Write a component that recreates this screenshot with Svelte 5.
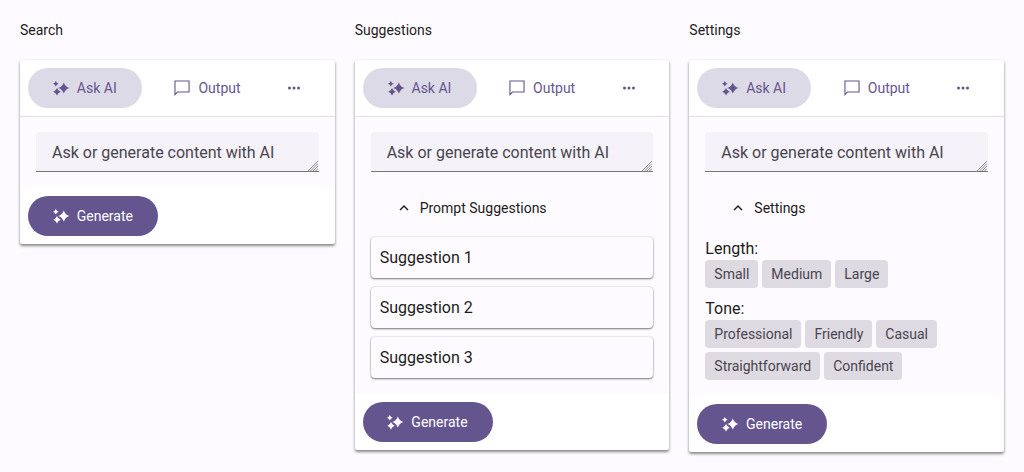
<script lang="ts">
	const lengths = ['Small', 'Medium', 'Large'];
	const tones = ['Professional', 'Friendly', 'Casual', 'Straightforward', 'Confident'];
	const suggestions = ['Suggestion 1', 'Suggestion 2', 'Suggestion 3'];
</script>

{#snippet spark(cls)}
	<svg class={cls} viewBox="0 0 18 18" aria-hidden="true">
		<path d="M11.8 3.4 Q13.2 7.6 17.4 9 Q13.2 10.4 11.8 14.6 Q10.4 10.4 6.2 9 Q10.4 7.6 11.8 3.4Z" />
		<path d="M3.8 1.9 Q4.5 4 6.6 4.7 Q4.5 5.4 3.8 7.5 Q3.1 5.4 1 4.7 Q3.1 4 3.8 1.9Z" />
		<path d="M5 9.1 Q5.9 11.9 8.7 12.8 Q5.9 13.7 5 16.5 Q4.1 13.7 1.3 12.8 Q4.1 11.9 5 9.1Z" />
	</svg>
{/snippet}

{#snippet tabs()}
	<div class="tabs">
		<button class="tab active">
			{@render spark('icon')}
			Ask AI
		</button>
		<button class="tab">
			<svg class="icon" viewBox="0 0 24 24" aria-hidden="true">
				<path d="M2.6 2.6 H21.4 V17.4 H5.9 L2.6 20.7 Z" class="outline" />
			</svg>
			Output
		</button>
		<button class="more" aria-label="More">
			<svg viewBox="0 0 24 24" aria-hidden="true">
				<circle cx="6" cy="12" r="2" />
				<circle cx="12" cy="12" r="2" />
				<circle cx="18" cy="12" r="2" />
			</svg>
		</button>
	</div>
{/snippet}

{#snippet prompt()}
	<div class="prompt-wrap">
		<textarea class="prompt" placeholder="Ask or generate content with AI"></textarea>
		<svg class="grip" viewBox="0 0 10 10" aria-hidden="true">
			<path d="M10 0 L0 10 M10 2.5 L2.5 10 M10 5 L5 10 M10 7.5 L7.5 10" />
		</svg>
	</div>
{/snippet}

{#snippet footer()}
	<div class="footer">
		<button class="generate">
			{@render spark('icon')}
			Generate
		</button>
	</div>
{/snippet}

{#snippet accordion(title)}
	<div class="accordion">
		<svg class="chevron" viewBox="0 0 24 24" aria-hidden="true">
			<path d="M12 8l-6 6 1.41 1.41L12 10.83l4.59 4.58L18 14z" />
		</svg>
		{title}
	</div>
{/snippet}

<div class="page">
	<section class="column">
		<h2>Search</h2>
		<div class="card">
			{@render tabs()}
			<div class="body">
				{@render prompt()}
			</div>
			{@render footer()}
		</div>
	</section>

	<section class="column">
		<h2>Suggestions</h2>
		<div class="card">
			{@render tabs()}
			<div class="body">
				{@render prompt()}
				{@render accordion('Prompt Suggestions')}
				<div class="suggestions">
					{#each suggestions as s}
						<div class="suggestion">{s}</div>
					{/each}
				</div>
			</div>
			{@render footer()}
		</div>
	</section>

	<section class="column">
		<h2>Settings</h2>
		<div class="card">
			{@render tabs()}
			<div class="body">
				{@render prompt()}
				{@render accordion('Settings')}
				<div class="settings">
					<div class="label">Length:</div>
					<div class="chips">
						{#each lengths as c}
							<span class="chip">{c}</span>
						{/each}
					</div>
					<div class="label tone">Tone:</div>
					<div class="chips">
						{#each tones as c}
							<span class="chip">{c}</span>
						{/each}
					</div>
				</div>
			</div>
			{@render footer()}
		</div>
	</section>
</div>

<style>
	:global(body) {
		background: #fdfbff;
		font-family: Roboto, sans-serif;
	}
	.page {
		display: grid;
		grid-template-columns: repeat(3, 1fr);
		gap: 20px;
		padding: 20px;
		height: 472px;
		box-sizing: border-box;
		align-items: start;
		color: #1d1b20;
	}
	h2 {
		margin: 0 0 20px;
		font-size: 14px;
		font-weight: 400;
		line-height: 20px;
	}
	.card {
		background: #fff;
		border-radius: 2px;
		box-shadow: 0 2px 3px rgba(0, 0, 0, 0.45), 0 0 2px rgba(0, 0, 0, 0.1);
	}
	.tabs {
		display: flex;
		align-items: center;
		gap: 8px;
		height: 57px;
		box-sizing: border-box;
		padding: 0 8px;
		border-bottom: 1px solid #e3e1e6;
	}
	button {
		font-family: inherit;
		border: 0;
		background: none;
		padding: 0;
		cursor: pointer;
	}
	.tab {
		display: flex;
		align-items: center;
		justify-content: center;
		gap: 7px;
		width: 114px;
		height: 40px;
		border-radius: 20px;
		font-size: 14px;
		color: #65558f;
		fill: #65558f;
	}
	.tab.active {
		padding-right: 1.4px;
		background: #dcdae6;
	}
	.icon {
		width: 18px;
		height: 18px;
		flex: none;
	}
	.outline {
		fill: none;
		stroke: #65558f;
		stroke-width: 1.5;
	}
	.more {
		display: flex;
		align-items: center;
		justify-content: center;
		width: 40px;
		height: 40px;
		margin-left: 2px;
		fill: #65558f;
	}
	.more svg {
		width: 18px;
		height: 18px;
	}
	.body {
		display: flex;
		flex-direction: column;
		padding: 15px 16px 16px;
		background: #fdfbff;
	}
	.prompt-wrap {
		position: relative;
	}
	.prompt {
		display: block;
		box-sizing: border-box;
		width: 100%;
		height: 40px;
		padding: 10px 16px 8px;
		margin: 0;
		border: 0;
		border-bottom: 1px solid #79747e;
		border-radius: 4px 4px 0 0;
		outline: 0;
		background: #f5f2f9;
		font-family: inherit;
		font-size: 16px;
		line-height: 22px;
		color: #49454f;
		resize: none;
	}
	.prompt::placeholder {
		color: #49454f;
		opacity: 1;
	}
	.grip {
		position: absolute;
		right: 1px;
		bottom: 1px;
		width: 10px;
		height: 10px;
		pointer-events: none;
	}
	.grip path {
		fill: none;
		stroke: #79747e;
		stroke-width: 0.8;
	}
	.accordion {
		display: flex;
		align-items: center;
		gap: 4px;
		height: 40px;
		margin: 16px 0 0;
		padding-left: 24px;
		font-size: 14px;
		color: #1d1b20;
	}
	.chevron {
		width: 18px;
		height: 18px;
		fill: #1d1b20;
		margin-right: 3px;
	}
	.suggestions {
		display: flex;
		flex-direction: column;
		gap: 9px;
		margin-top: 9px;
	}
	.suggestion {
		display: flex;
		align-items: center;
		height: 41px;
		padding: 0 9px;
		box-sizing: border-box;
		background: #fdfbff;
		border-radius: 4px;
		font-size: 16px;
		box-shadow: 0 1px 2px rgba(0, 0, 0, 0.5), 0 0 2px rgba(0, 0, 0, 0.2);
	}
	.settings {
		margin-top: 11px;
	}
	.label {
		font-size: 16px;
		line-height: 20px;
		margin-bottom: 1px;
	}
	.label.tone {
		margin-top: 11px;
	}
	.chips {
		display: flex;
		flex-wrap: wrap;
		gap: 4px;
	}
	.chip {
		display: block;
		height: 28px;
		line-height: 28px;
		padding: 0 9px;
		border-radius: 4px;
		background: #dedae1;
		font-size: 14px;
		color: #49454f;
	}
	.footer {
		padding: 8px;
		height: 56px;
		box-sizing: border-box;
	}
	.generate {
		display: flex;
		align-items: center;
		justify-content: center;
		gap: 7px;
		width: 130px;
		height: 40px;
		padding-right: 1.4px;
		border-radius: 20px;
		background: #65558f;
		color: #fff;
		fill: #fff;
		font-size: 14px;
	}
</style>
